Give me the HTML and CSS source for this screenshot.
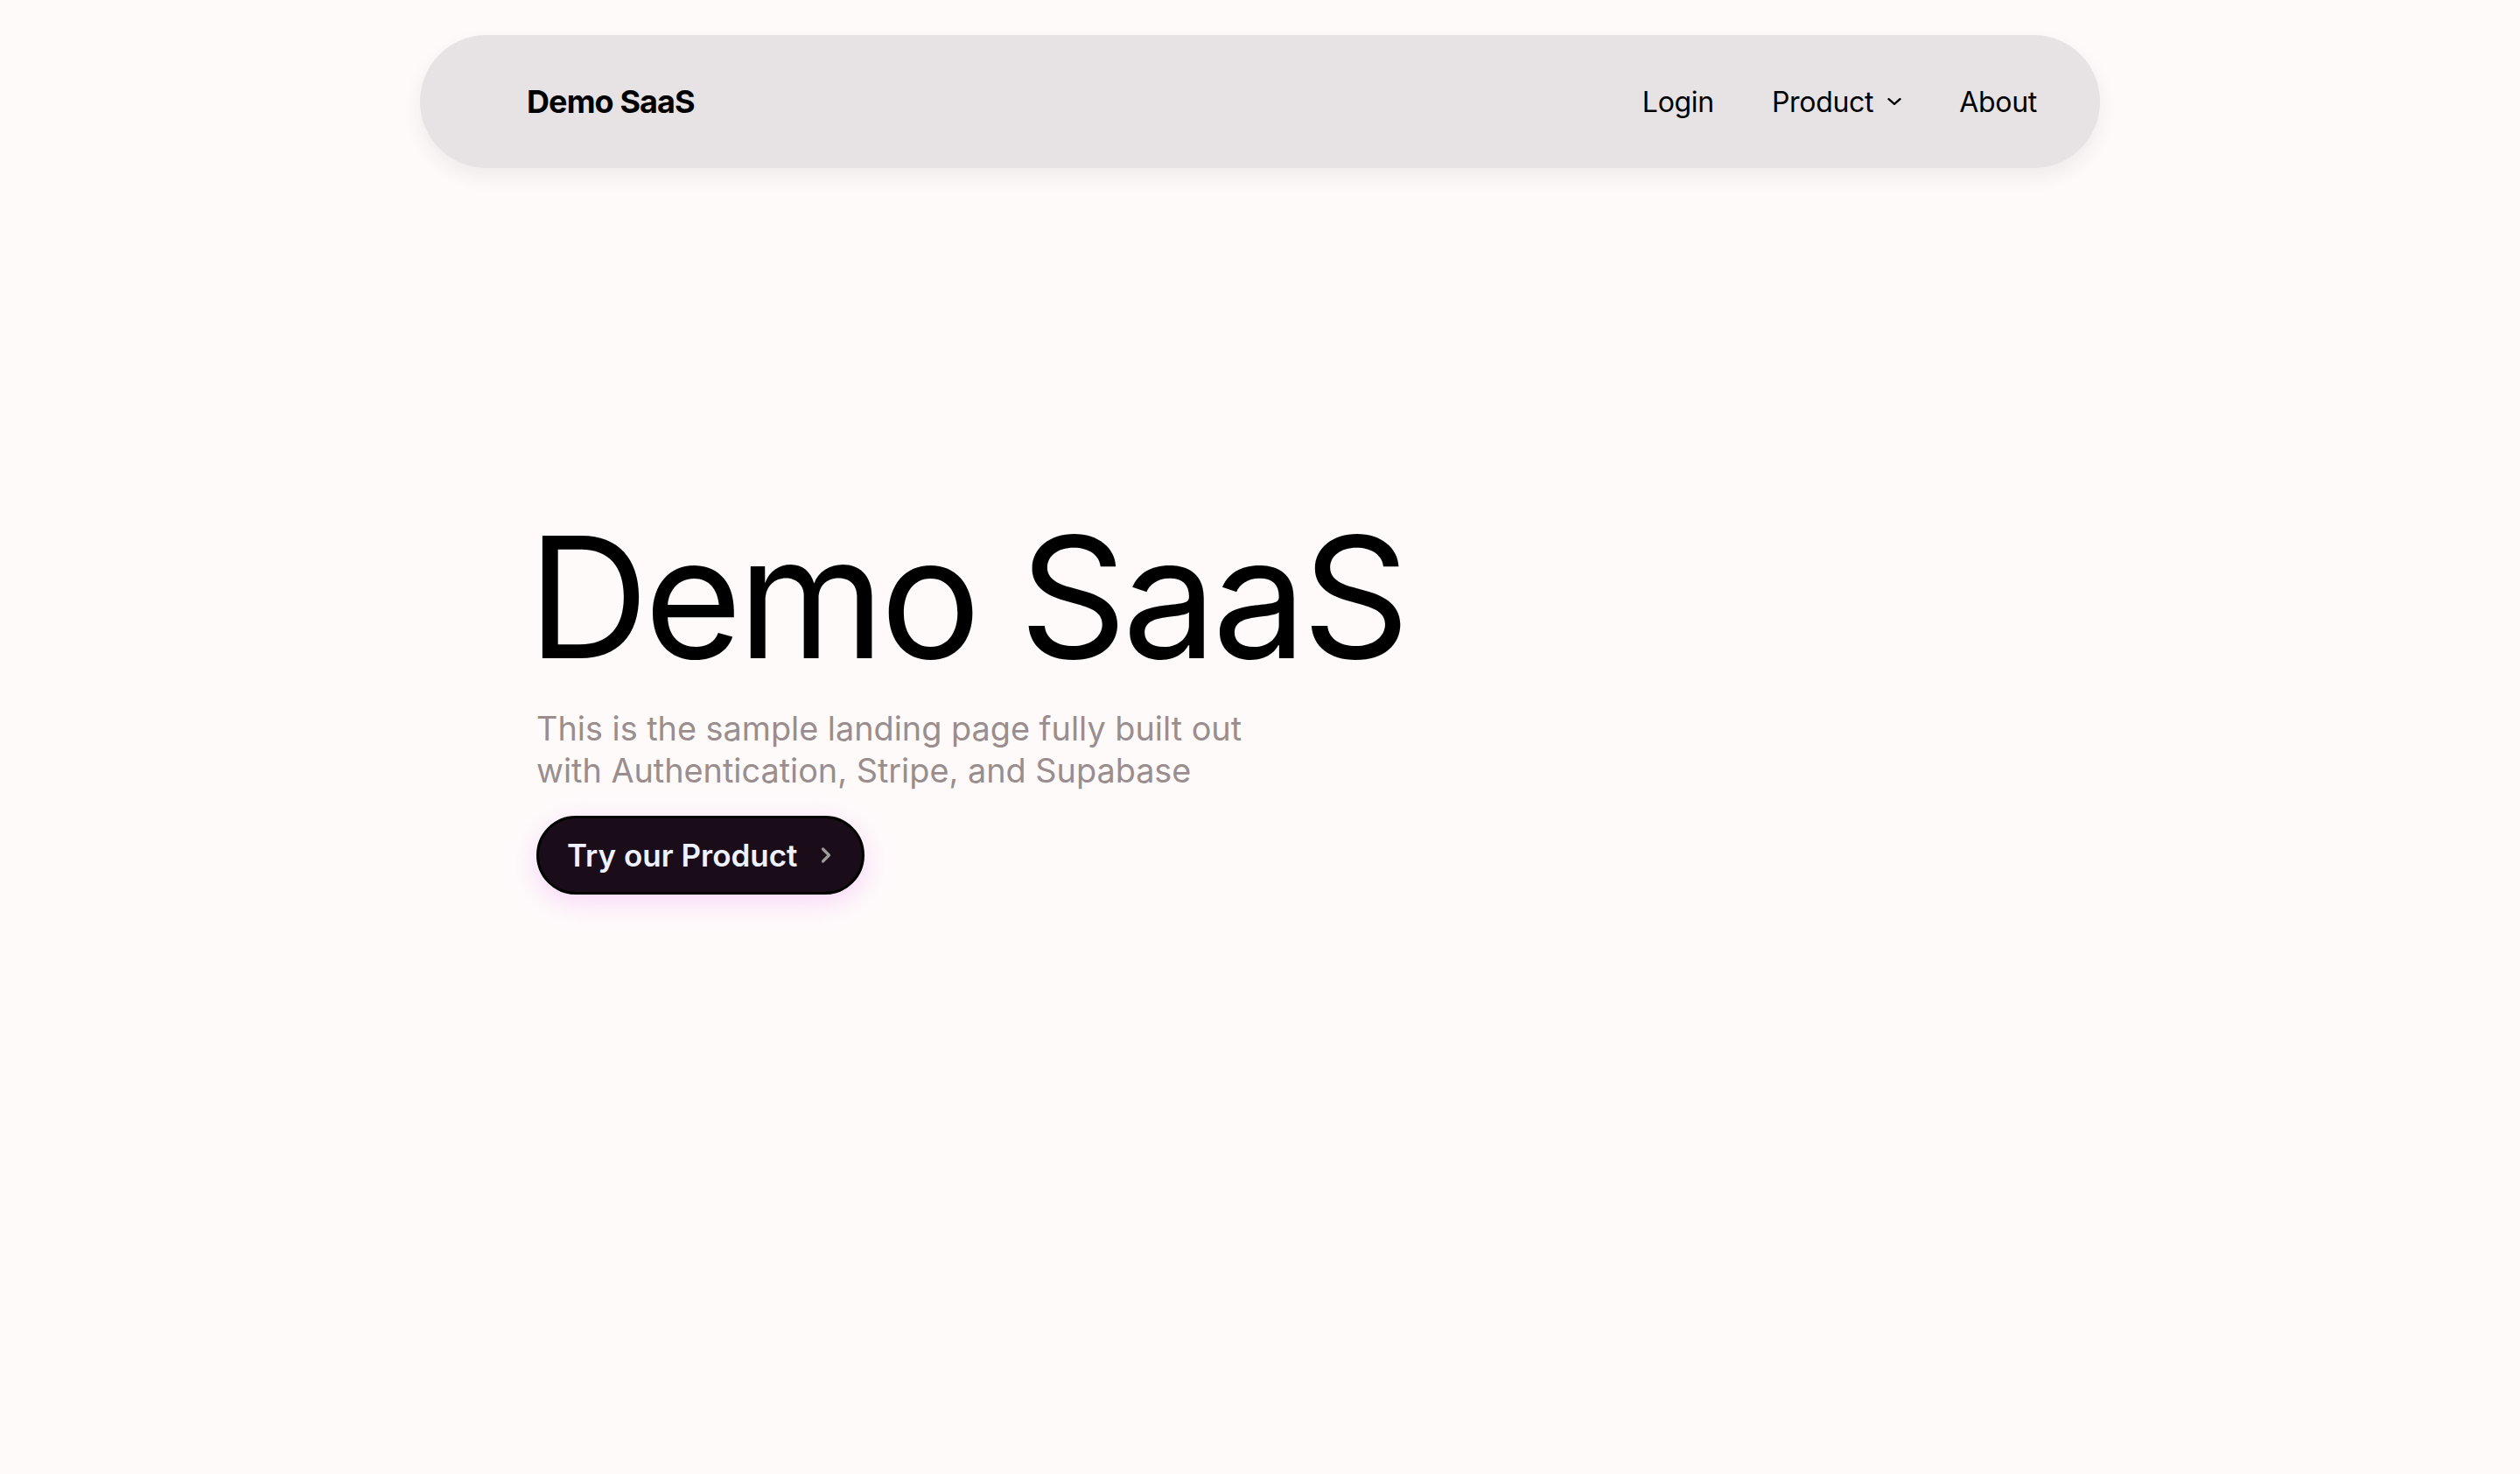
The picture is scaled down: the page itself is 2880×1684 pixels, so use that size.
FILE: index.html
```html
<!DOCTYPE html>
<html lang="en">
<head>
<meta charset="utf-8">
<title>Demo SaaS</title>
<link rel="stylesheet" href="styles.css">
</head>
<body>
<header class="header">
  <nav class="navbar">
    <a class="brand" href="#">Demo SaaS</a>
    <ul class="nav-links">
      <li><a href="#">Login</a></li>
      <li><a href="#" class="dropdown">Product
        <svg class="nav-chevron" viewBox="0 0 16 8" width="16" height="8" aria-hidden="true"><path d="M1.5 1.2 L8 6.8 L14.5 1.2" fill="none" stroke="currentColor" stroke-width="2.4" stroke-linecap="round" stroke-linejoin="round"/></svg>
      </a></li>
      <li><a href="#">About</a></li>
    </ul>
  </nav>
</header>
<main class="hero">
  <h1 class="hero-title">Demo SaaS</h1>
  <p class="hero-sub">This is the sample landing page fully built out<br>with Authentication, Stripe, and Supabase</p>
  <a class="cta" href="#">Try our Product
    <svg class="cta-chevron" viewBox="0 0 12 20" width="12" height="20" aria-hidden="true"><path d="M2.5 3 L9.5 10 L2.5 17" fill="none" stroke="currentColor" stroke-width="3.2" stroke-linecap="round" stroke-linejoin="round"/></svg>
  </a>
</main>
</body>
</html>
```
FILE: styles.css
```css
* { box-sizing: border-box; }
html, body { margin: 0; padding: 0; }
body {
  background: #fefafa;
  font-family: Inter, "Noto Sans", sans-serif;
  color: #000;
  min-height: 1684px;
}
a { color: inherit; text-decoration: none; }

.header {
  display: flex;
  justify-content: center;
  padding-top: 40px;
}
.navbar {
  width: 1920px;
  height: 152px;
  border-radius: 76px;
  background: #e7e3e4;
  box-shadow: 0 10px 22px rgba(60, 40, 45, 0.07);
  display: flex;
  align-items: center;
  justify-content: space-between;
  padding: 0 72px 0 122px;
}
.brand {
  font-size: 36px;
  font-weight: 700;
  letter-spacing: -0.9px;
}
.nav-links {
  list-style: none;
  margin: 0;
  padding: 0;
  display: flex;
  align-items: center;
  gap: 66px;
  font-size: 32px;
  letter-spacing: -0.3px;
}
.dropdown {
  display: flex;
  align-items: center;
  gap: 16px;
}
.nav-chevron { display: block; }

.hero {
  display: flex;
  flex-direction: column;
  align-items: flex-start;
  gap: 30px;
  padding: 394px 0 0 613px;
}
.hero-title {
  margin: 0;
  font-size: 192px;
  line-height: 1;
  font-weight: 400;
  letter-spacing: -5.2px;
  margin-left: -10px;
}
.hero-sub {
  margin: 0 0 -2px;
  font-size: 37.8px;
  line-height: 48px;
  color: #9a8d8d;
}
.cta {
  display: flex;
  align-items: center;
  gap: 27px;
  height: 90px;
  padding: 0 35px 0 32px;
  border: 3px solid #000;
  border-radius: 45px;
  background: #1a0d19;
  color: #eef1ff;
  font-size: 35px;
  font-weight: 600;
  box-shadow: 0 8px 30px rgba(232, 121, 249, 0.28);
}
.cta-chevron { color: #a09a9c; display: block; }
```
